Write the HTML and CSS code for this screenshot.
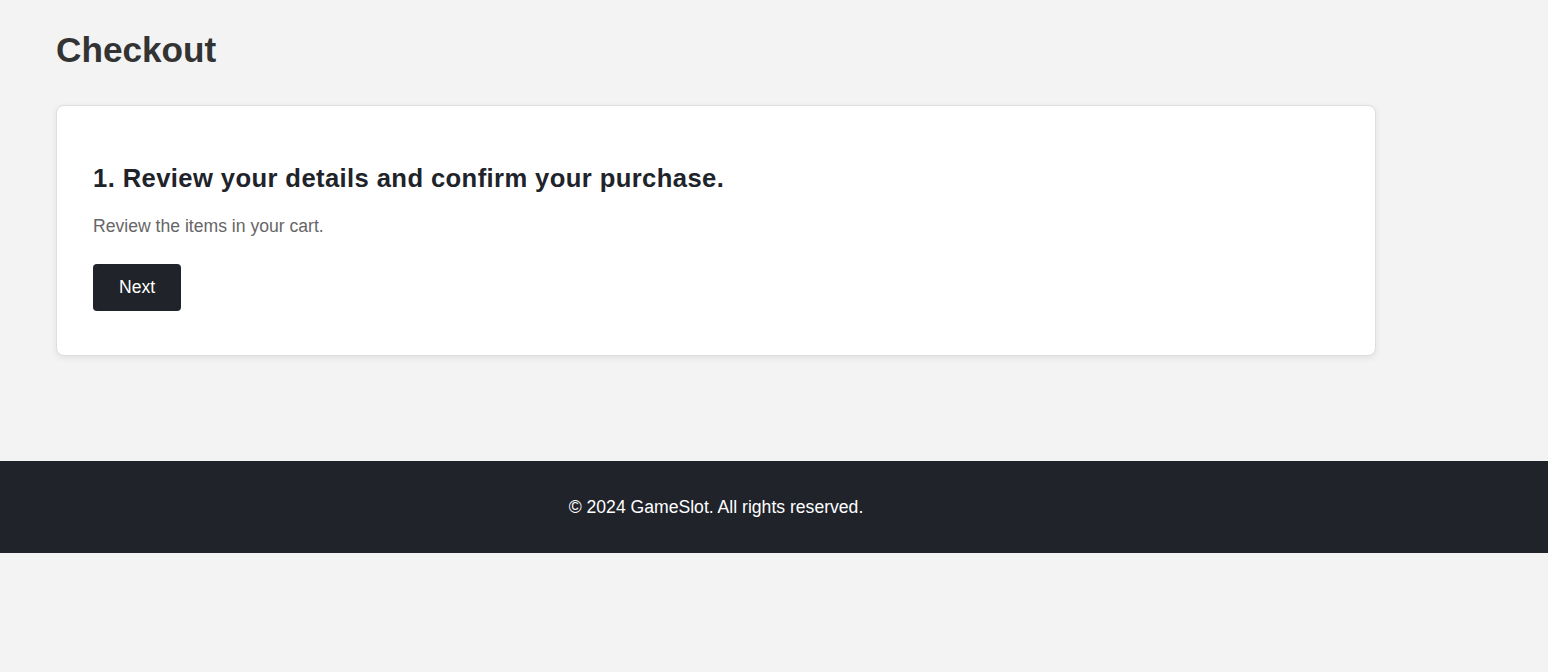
FILE: index.html
```html
<!DOCTYPE html>
<html lang="en">
<head>
<meta charset="utf-8">
<title>Checkout - GameSlot</title>
<link rel="stylesheet" href="styles.css">
</head>
<body>
<main class="page">
  <h1 class="page-title">Checkout</h1>
  <section class="card">
    <h2 class="step-title">1. Review your details and confirm your purchase.</h2>
    <p class="step-text">Review the items in your cart.</p>
    <button class="btn" type="button">Next</button>
  </section>
</main>
<footer class="footer">
  <div class="footer-inner">© 2024 GameSlot. All rights reserved.</div>
</footer>
</body>
</html>
```
FILE: styles.css
```css
html, body {
  margin: 0;
  padding: 0;
}
body {
  background: #f3f3f3;
  font-family: "Liberation Sans", Arial, sans-serif;
  color: #333;
}
.page {
  width: 1320px;
  margin-left: 56px;
  padding: 28px 0 105px;
}
.page-title {
  margin: 0 0 33px;
  font-size: 35.2px;
  line-height: 44px;
  color: #333;
}
.card {
  background: #fff;
  border: 1px solid #dedede;
  border-radius: 8px;
  box-shadow: 0 2px 6px rgba(0,0,0,0.08);
  padding: 58px 36px 44px;
}
.step-title {
  margin: 0 0 23px;
  font-size: 25.6px;
  line-height: 28px;
  letter-spacing: 0.4px;
  color: #20232a;
}
.step-text {
  margin: 0 0 27px;
  font-size: 17.6px;
  line-height: 22px;
  color: #666;
}
.btn {
  display: block;
  background: #20232a;
  color: #fff;
  border: none;
  border-radius: 4px;
  font-family: inherit;
  font-size: 17.6px;
  line-height: 21px;
  padding: 13px 26px;
  cursor: pointer;
}
.footer {
  background: #20232a;
  color: #fff;
}
.footer-inner {
  width: 1320px;
  margin-left: 56px;
  text-align: center;
  font-size: 17.6px;
  line-height: 21px;
  padding: 36px 0 35px;
}
```
